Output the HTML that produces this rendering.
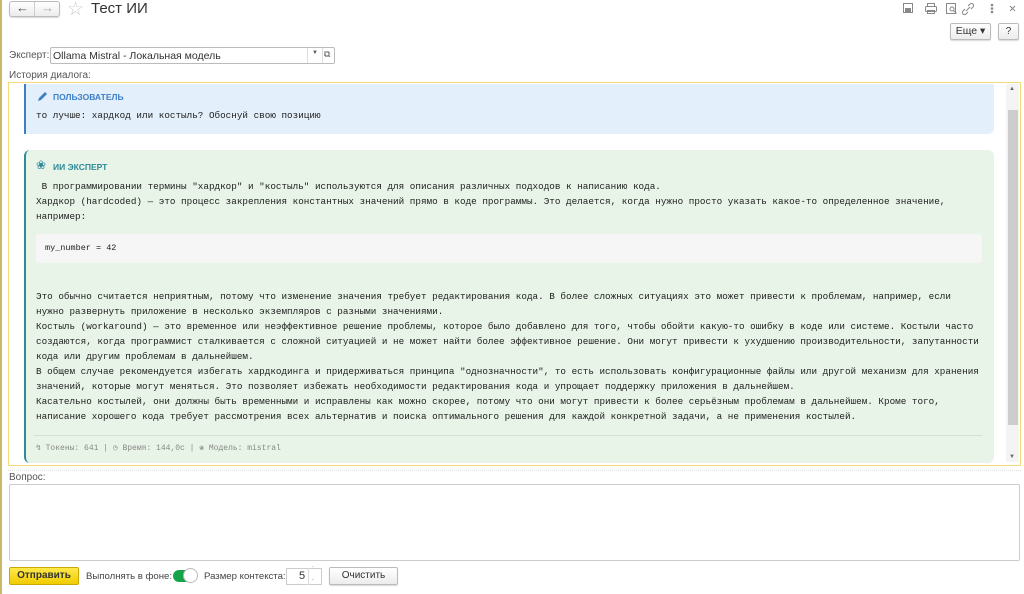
<!DOCTYPE html>
<html><head><meta charset="utf-8"><style>
*{box-sizing:border-box;margin:0;padding:0}
body{width:1024px;height:594px;background:#fff;font-family:"Liberation Sans",sans-serif;font-size:10px;color:#333;position:relative;overflow:hidden}
.abs{position:absolute}
.mono{font-family:"Liberation Mono","DejaVu Sans Mono",monospace;font-size:9.3px;color:#222}
.btn{position:absolute;border:1px solid #bbb;border-radius:2px;background:linear-gradient(#fff,#ececec);box-shadow:0 1px 1px rgba(0,0,0,.15);text-align:center;color:#333}
.ln{position:absolute;left:36px;white-space:pre;line-height:15px}
</style></head><body>
<div class="abs" style="left:0;top:0;width:2px;height:594px;background:#c8b868"></div>
<div class="btn" style="left:9px;top:1px;width:51px;height:16px;border-radius:3px"></div>
<div class="abs" style="left:34px;top:2px;width:1px;height:14px;background:#ccc"></div>
<div class="abs" style="left:16px;top:0px;font-size:13px;color:#555">&#8592;</div>
<div class="abs" style="left:41px;top:0px;font-size:13px;color:#aaa">&#8594;</div>
<div class="abs" style="left:67px;top:-2px;font-size:19px;color:#ccc">&#9734;</div>
<div class="abs" style="left:91px;top:0px;font-size:15px;color:#333">Тест ИИ</div>
<svg class="abs" style="left:900px;top:2px" width="124" height="14" viewBox="0 0 124 14" fill="none" stroke="#888" stroke-width="1">
<rect x="3.5" y="1.5" width="9" height="9"/><rect x="5.5" y="6.5" width="5" height="4" fill="#888"/>
<rect x="25.5" y="4.5" width="11" height="5" rx="1"/><rect x="27.5" y="1.5" width="7" height="3"/><rect x="27.5" y="8.5" width="7" height="3"/>
<rect x="46.5" y="1.5" width="9" height="10"/><circle cx="52" cy="7" r="2"/><path d="M53.5 8.5l3 3"/>
<path d="M66 9l4-4M65 7l-2 2a2 2 0 003 3l2-2M71 7l2-2a2 2 0 00-3-3l-2 2"/>
<circle cx="92" cy="3" r=".8" fill="#888"/><circle cx="92" cy="6.5" r=".8" fill="#888"/><circle cx="92" cy="10" r=".8" fill="#888"/>
<path d="M110 4l5 5M115 4l-5 5"/>
</svg>
<div class="btn" style="left:950px;top:23px;width:41px;height:17px;line-height:15px;font-size:10.5px">Еще &#9662;</div>
<div class="btn" style="left:998px;top:23px;width:21px;height:17px;line-height:15px">?</div>
<div class="abs" style="left:9px;top:50px;color:#555">Эксперт:</div>
<div class="abs" style="left:50px;top:47px;width:285px;height:17px;border:1px solid #bbb;border-radius:2px"></div>
<div class="abs" style="left:53px;top:50px;color:#333;font-size:10.5px">Ollama Mistral - Локальная модель</div>
<div class="abs" style="left:307px;top:48px;width:1px;height:15px;background:#ddd"></div>
<div class="abs" style="left:312px;top:50px;font-size:6px;color:#555">&#9660;</div>
<div class="abs" style="left:322px;top:48px;width:1px;height:15px;background:#ddd"></div>
<div class="abs" style="left:324px;top:49px;font-size:9px;color:#555">&#10697;</div>
<div class="abs" style="left:9px;top:70px;color:#555">История диалога:</div>
<div class="abs" style="left:8px;top:82px;width:1013px;height:384px;border:1px solid #f2d97a"></div>
<div class="abs" style="left:1006px;top:84px;width:13px;height:378px;background:#f4f4f4"></div>
<div class="abs" style="left:1008px;top:110px;width:10px;height:315px;background:#cdcdcd"></div>
<div class="abs" style="left:1009px;top:86px;font-size:6px;color:#666">&#9650;</div>
<div class="abs" style="left:1009px;top:454px;font-size:6px;color:#666">&#9660;</div>
<div class="abs" style="left:24px;top:84px;width:970px;height:50px;background:#e3f0fb;border-left:2px solid #3d7fc6;border-radius:0 0 6px 0"></div>
<svg class="abs" style="left:36px;top:91px" width="12" height="12" viewBox="0 0 12 12"><path d="M2 10l1-3 6-6 2 2-6 6z" fill="#3d7fc6"/></svg>
<div class="abs" style="left:53px;top:92px;font-size:8.5px;font-weight:bold;color:#3d7fc6">ПОЛЬЗОВАТЕЛЬ</div>
<div class="mono ln" style="top:108px">то лучше: хардкод или костыль? Обоснуй свою позицию</div>
<div class="abs" style="left:24px;top:150px;width:970px;height:313px;background:#e8f4e8;border-left:2px solid #2f8a9a;border-radius:6px"></div>
<div class="abs" style="left:36px;top:159px;font-size:12px;color:#2f8a9a;line-height:12px">&#10048;</div>
<div class="abs" style="left:53px;top:162px;font-size:8.5px;font-weight:bold;color:#2f8a9a">ИИ ЭКСПЕРТ</div>
<div class="mono ln" style="top:179px"> В программировании термины "хардкор" и "костыль" используются для описания различных подходов к написанию кода.</div>
<div class="mono ln" style="top:194px">Хардкор (hardcoded) — это процесс закрепления константных значений прямо в коде программы. Это делается, когда нужно просто указать какое-то определенное значение,</div>
<div class="mono ln" style="top:209px">например:</div>
<div class="abs" style="left:36px;top:234px;width:946px;height:29px;background:#f6f6f6;border-radius:3px"></div>
<div class="mono ln" style="left:45px;top:241px;font-size:8.5px">my_number = 42</div>
<div class="mono ln" style="top:289px">Это обычно считается неприятным, потому что изменение значения требует редактирования кода. В более сложных ситуациях это может привести к проблемам, например, если</div>
<div class="mono ln" style="top:304px">нужно развернуть приложение в несколько экземпляров с разными значениями.</div>
<div class="mono ln" style="top:319px">Костыль (workaround) — это временное или неэффективное решение проблемы, которое было добавлено для того, чтобы обойти какую-то ошибку в коде или системе. Костыли часто</div>
<div class="mono ln" style="top:334px">создаются, когда программист сталкивается с сложной ситуацией и не может найти более эффективное решение. Они могут привести к ухудшению производительности, запутанности</div>
<div class="mono ln" style="top:349px">кода или другим проблемам в дальнейшем.</div>
<div class="mono ln" style="top:364px">В общем случае рекомендуется избегать хардкодинга и придерживаться принципа "однозначности", то есть использовать конфигурационные файлы или другой механизм для хранения</div>
<div class="mono ln" style="top:379px">значений, которые могут меняться. Это позволяет избежать необходимости редактирования кода и упрощает поддержку приложения в дальнейшем.</div>
<div class="mono ln" style="top:394px">Касательно костылей, они должны быть временными и исправлены как можно скорее, потому что они могут привести к более серьёзным проблемам в дальнейшем. Кроме того,</div>
<div class="mono ln" style="top:409px">написание хорошего кода требует рассмотрения всех альтернатив и поиска оптимального решения для каждой конкретной задачи, а не применения костылей.</div>
<div class="abs" style="left:34px;top:435px;width:948px;height:1px;background:#d4e0d4"></div>
<div class="mono ln" style="top:441px;font-size:8px;color:#888">&#8623; Токены: 641 | &#9719; Время: 144,0с | &#10048; Модель: mistral</div>
<div class="abs" style="left:8px;top:470px;border-top:1px dotted #ddd;width:1013px"></div>
<div class="abs" style="left:9px;top:472px;color:#555">Вопрос:</div>
<div class="abs" style="left:9px;top:484px;width:1011px;height:77px;border:1px solid #ccc;border-radius:2px"></div>
<div class="abs" style="left:9px;top:567px;width:70px;height:18px;background:linear-gradient(#ffe84a,#f0cc00);border:1px solid #c9a800;border-radius:2px;text-align:center;line-height:16px;font-weight:bold;color:#333">Отправить</div>
<div class="abs" style="left:86px;top:571px;color:#444;font-size:9.6px">Выполнять в фоне:</div>
<div class="abs" style="left:173px;top:570px;width:23px;height:12px;background:#17a34a;border-radius:6px"></div>
<div class="abs" style="left:183px;top:568px;width:15px;height:15px;background:#fff;border:1px solid #bbb;border-radius:50%"></div>
<div class="abs" style="left:204px;top:571px;color:#444;font-size:9.6px">Размер контекста:</div>
<div class="abs" style="left:286px;top:568px;width:36px;height:17px;border:1px solid #ccc"></div>
<div class="abs" style="left:299px;top:570px;color:#333;font-size:11px">5</div>
<div class="abs" style="left:308px;top:568px;width:1px;height:17px;background:#ddd"></div>
<div class="abs" style="left:312px;top:567px;font-size:7px;color:#555;line-height:8px">&#729;<br>.</div>
<div class="btn" style="left:329px;top:567px;width:69px;height:18px;line-height:16px">Очистить</div>
</body></html>
